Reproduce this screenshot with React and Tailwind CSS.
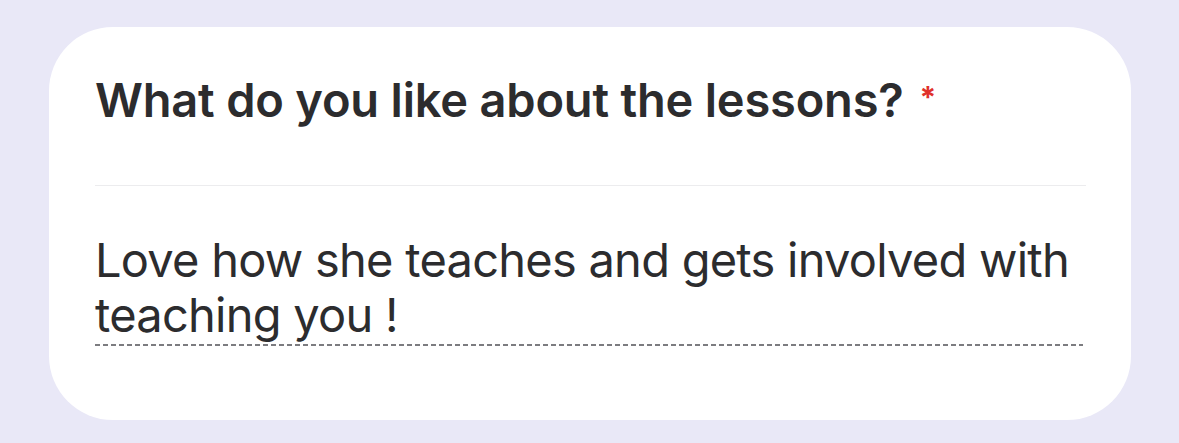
export default function App() {
  return (
    <div className="min-h-[443px] w-full bg-[#e9e8f7] pt-[27px] pl-[49px] pr-[48px] pb-[23px] font-['Inter','Noto_Sans',sans-serif]">
      <div className="h-[393px] rounded-[64px] bg-white pt-[45px] pl-[46px] pr-[45px]">
        {/* question title */}
        <h2 className="flex items-start text-[47px] leading-[56px] font-semibold tracking-[-0.2px] text-[#2c2c2e]">
          What do you like about the lessons?
          <span className="ml-[16px] text-[30px] leading-[50px] font-bold text-[#e0312b]">*</span>
        </h2>

        <div className="mt-[57px] h-px bg-[#ececee]" />

        {/* answer */}
        <div className="mt-[46px] pr-[3px]">
          <p className="text-[47px] leading-[55px] font-normal tracking-[-0.75px] text-[#2c2c2e]">
            Love how she teaches and gets involved with teaching you !
          </p>
          <div className="mt-[2px] h-[2px] bg-[repeating-linear-gradient(to_right,#7c7c80_0_5px,transparent_5px_8px)]" />
        </div>
      </div>
    </div>
  );
}
